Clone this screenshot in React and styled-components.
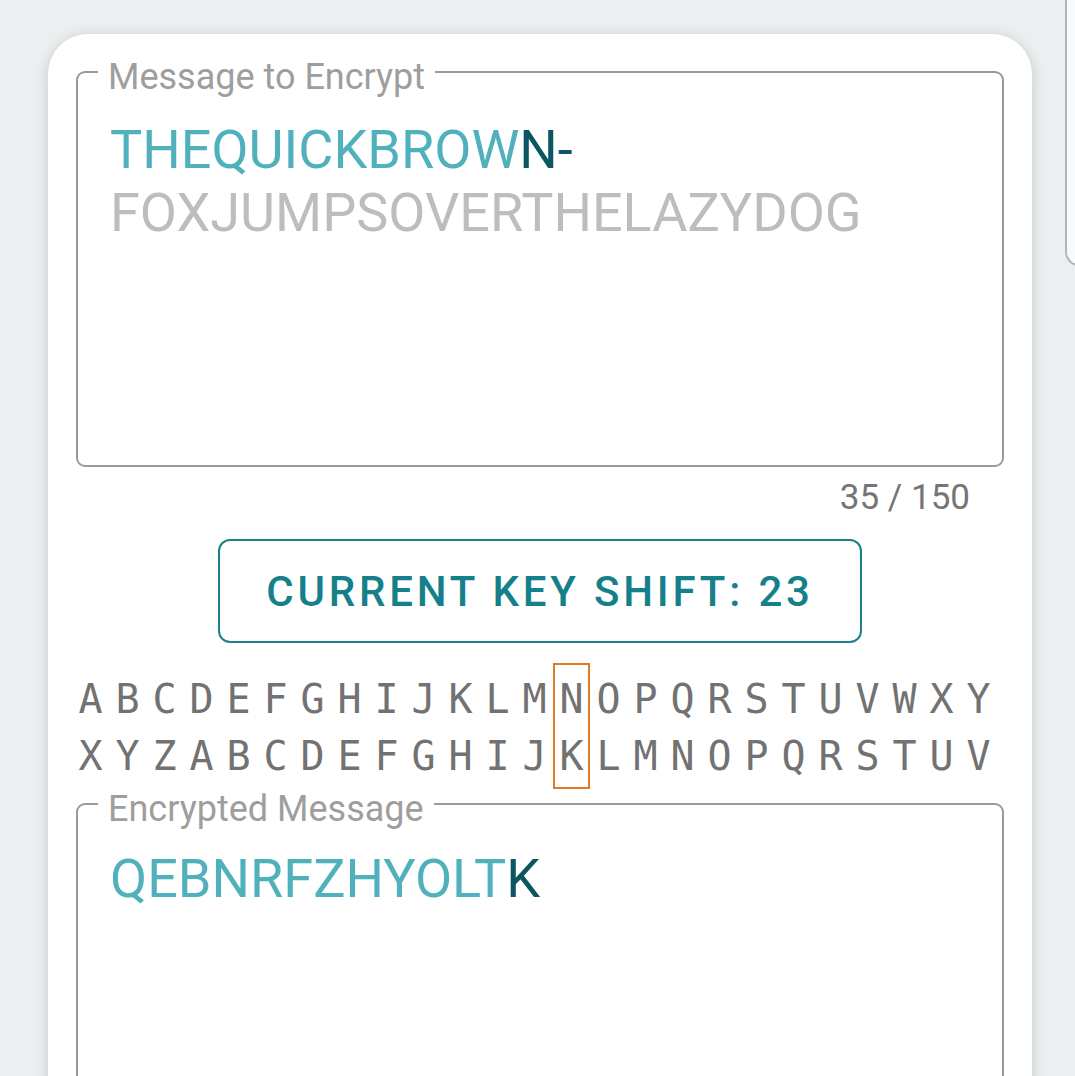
import React from 'react';
import styled, { createGlobalStyle } from 'styled-components';

const GlobalStyle = createGlobalStyle`
  html, body {
    margin: 0;
    padding: 0;
    background: #ebeff0;
    overflow: hidden;
  }
  body {
    font-family: Roboto, "Noto Sans", sans-serif;
  }
`;

const Page = styled.div`
  display: flex;
  align-items: flex-start;
  gap: 33px;
  width: 1075px;
  height: 1076px;
  overflow: hidden;
`;

const Card = styled.div`
  flex: 0 0 984px;
  margin-top: 34px;
  margin-left: 48px;
  box-sizing: border-box;
  padding: 15px 28px 0;
  background: #fff;
  border-radius: 40px;
  box-shadow: 0 2px 14px rgba(0, 0, 0, 0.16);
  display: flex;
  flex-direction: column;
`;

const SidePanel = styled.div`
  flex: 0 0 120px;
  height: 266px;
  box-sizing: border-box;
  background: #f8f9fa;
  border-left: 2px solid #b4b6b8;
  border-bottom: 2px solid #b4b6b8;
  border-bottom-left-radius: 14px;
`;

const Field = styled.fieldset`
  margin: ${(p) => p.$offset || 0} 0 0;
  padding: 0 32px;
  border: 2px solid #9a9a9a;
  border-radius: 9px;
  min-width: 0;
`;

const Legend = styled.legend`
  margin-left: -12px;
  padding: 10px 10px 0;
  font-size: 36px;
  line-height: 36px;
  color: #9e9e9e;
`;

const FieldText = styled.div`
  box-sizing: border-box;
  height: ${(p) => p.$height}px;
  padding-top: ${(p) => p.$pad}px;
  font-size: 54px;
  line-height: 63px;
  color: #bdbdbd;
  word-break: break-all;
`;

const Done = styled.span`
  color: #50b1bd;
`;

const Current = styled.span`
  color: #0b5661;
`;

const Counter = styled.div`
  margin: 11px 34px 0 0;
  text-align: right;
  font-size: 35px;
  line-height: 40px;
  color: #757575;
`;

const ShiftButton = styled.div`
  align-self: center;
  margin-top: 21px;
  width: 644px;
  height: 104px;
  box-sizing: border-box;
  border: 2px solid #1a808a;
  border-radius: 12px;
  display: flex;
  align-items: center;
  justify-content: center;
  font-size: 42px;
  font-weight: 500;
  letter-spacing: 3.8px;
  color: #15808a;
`;

const Alphabet = styled.div`
  display: flex;
  margin: 20px 0 0 -4px;
`;

const Column = styled.div`
  width: 37px;
  box-sizing: border-box;
  padding: 6px 0 2px;
  display: flex;
  flex-direction: column;
  align-items: center;
  border: 2px solid ${(p) => (p.$active ? '#e07a26' : 'transparent')};
  font-family: "DejaVu Sans Mono", "Liberation Mono", monospace;
  font-size: 40px;
  line-height: 57px;
  color: #727272;
`;

const LETTERS = 'ABCDEFGHIJKLMNOPQRSTUVWXYZ';
const SHIFT = 23;
const plain = LETTERS.slice(0, 25).split('');
const cipher = plain.map((c) => LETTERS[(LETTERS.indexOf(c) + SHIFT) % 26]);

export default function App() {
  return (
    <>
      <GlobalStyle />
      <Page>
        <Card>
          <Field>
            <Legend>Message to Encrypt</Legend>
            <FieldText $height={370} $pad={23}>
              <Done>THEQUICKBROW</Done>
              <Current>N-</Current>
              <br />
              FOXJUMPSOVERTHELAZYDOG
            </FieldText>
          </Field>
          <Counter>35 / 150</Counter>
          <ShiftButton>CURRENT KEY SHIFT: {SHIFT}</ShiftButton>
          <Alphabet>
            {plain.map((c, i) => (
              <Column key={c} $active={i === 13}>
                <span>{c}</span>
                <span>{cipher[i]}</span>
              </Column>
            ))}
          </Alphabet>
          <Field $offset="-8px">
            <Legend>Encrypted Message</Legend>
            <FieldText $height={370} $pad={20}>
              <Done>QEBNRFZHYOLT</Done>
              <Current>K</Current>
            </FieldText>
          </Field>
        </Card>
        <SidePanel />
      </Page>
    </>
  );
}
